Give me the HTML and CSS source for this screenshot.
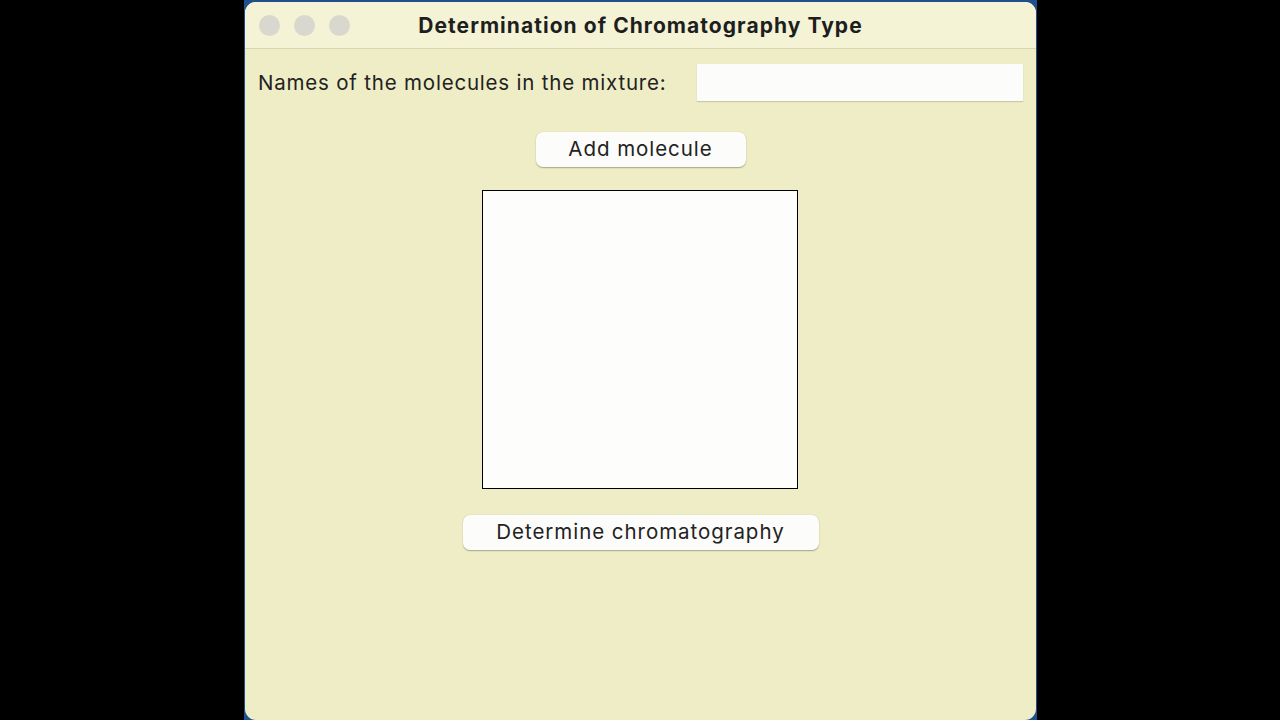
FILE: index.html
```html
<!DOCTYPE html>
<html>
<head>
<meta charset="utf-8">
<link rel="stylesheet" href="styles.css">
<title>Determination of Chromatography Type</title>
</head>
<body>
<div class="desktop">
  <div class="window">
    <div class="titlebar">
      <div class="lights">
        <span class="light"></span>
        <span class="light"></span>
        <span class="light"></span>
      </div>
      <div class="title">Determination of Chromatography Type</div>
    </div>
    <div class="content">
      <div class="row">
        <label class="label">Names of the molecules in the mixture:</label>
        <div class="input"></div>
      </div>
      <button class="btn btn-add">Add molecule</button>
      <div class="listbox"></div>
      <button class="btn btn-det">Determine chromatography</button>
    </div>
  </div>
</div>
</body>
</html>
```

FILE: styles.css
```css
html, body {
  margin: 0;
  padding: 0;
  background: #000;
  height: 720px;
  overflow: hidden;
}
.desktop {
  margin-left: 244px;
  width: 793px;
  height: 720px;
  background: #1f4f8c;
  padding: 2px 1px 0 1px;
  box-sizing: border-box;
}
.window {
  height: 718px;
  background: #eeedc6;
  border-radius: 11px;
  overflow: hidden;
  display: flex;
  flex-direction: column;
  font-family: "Inter", "Liberation Sans", sans-serif;
  color: #222;
}
.titlebar {
  height: 46px;
  background: #f4f3d6;
  border-bottom: 1px solid #d8d6b6;
  display: flex;
  align-items: center;
  position: relative;
  flex: none;
}
.lights {
  display: flex;
  gap: 14px;
  margin-left: 14px;
}
.light {
  width: 21px;
  height: 21px;
  border-radius: 50%;
  background: #d9d8cf;
}
.title {
  position: absolute;
  left: 0;
  right: 0;
  text-align: center;
  font-weight: 700;
  font-size: 21px;
  letter-spacing: 1.05px;
  color: #1e1e1e;
  top: 11px;
}
.content {
  display: flex;
  flex-direction: column;
  align-items: center;
}
.row {
  align-self: stretch;
  display: flex;
  align-items: center;
  margin-top: 15px;
  padding: 0 13px 0 13px;
}
.label {
  font-size: 20.5px;
  letter-spacing: 0.8px;
  flex: 1;
}
.input {
  width: 326px;
  height: 37px;
  background: #fcfcfb;
  box-shadow: 0 1px 1px rgba(0,0,0,0.15);
}
.btn {
  font-family: "Inter", "Liberation Sans", sans-serif;
  font-size: 20.5px;
  letter-spacing: 0.95px;
  color: #222;
  background: #fcfcfb;
  border: none;
  border-radius: 7px;
  box-shadow: 0 0.5px 1px rgba(0,0,0,0.2), 0 1px 2px rgba(0,0,0,0.12);
  height: 35px;
  padding: 0 0 2px 0;
}
.btn-add {
  width: 210px;
  margin-top: 31px;
}
.listbox {
  width: 314px;
  height: 297px;
  background: #fdfdfb;
  border: 1px solid #000;
  margin-top: 23px;
  margin-right: 1px;
}
.btn-det {
  width: 356px;
  margin-top: 26px;
}
```
